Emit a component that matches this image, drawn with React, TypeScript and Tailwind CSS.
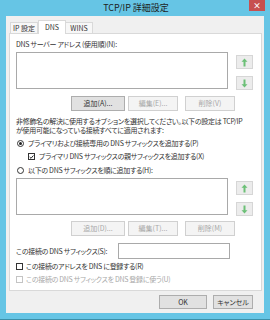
import React from 'react'

function Arrow({ down = false }: { down?: boolean }) {
  return (
    <svg width="7" height="9" viewBox="0 0 7 9" className={down ? 'rotate-180' : ''}>
      <path d="M3.5 0.5 L6.5 3.8 L4.5 3.8 L4.5 8.5 L2.5 8.5 L2.5 3.8 L0.5 3.8 Z" fill="#6cc077" />
    </svg>
  )
}

function ArrowButtons({ top }: { top: string }) {
  return (
    <div className={`flex flex-col gap-[7px] ${top}`}>
      <div className="w-[17px] h-[14px] bg-[#ececec] border border-[#d6d6d6] flex items-center justify-center">
        <Arrow />
      </div>
      <div className="w-[17px] h-[14px] bg-[#ececec] border border-[#d6d6d6] flex items-center justify-center">
        <Arrow down />
      </div>
    </div>
  )
}

function Btn({ label, w, enabled = false }: { label: string; w: string; enabled?: boolean }) {
  return (
    <div
      className={`${w} h-[15px] border flex items-center justify-center text-[7px] ${
        enabled ? 'bg-[#e1e1e1] border-[#adadad] text-[#333]' : 'bg-[#f4f4f4] border-[#d0d0d0] text-[#a8a8a8]'
      }`}
    >
      {label}
    </div>
  )
}

function ListRow({ top }: { top: string }) {
  return (
    <div className="flex">
      <div className="w-[212px] h-[37px] bg-white border border-[#a9a9a9]" />
      <div className="ml-[8px]">
        <ArrowButtons top={top} />
      </div>
    </div>
  )
}

function ButtonRow({ a, b, c }: { a: string; b: string; c: string }) {
  return (
    <div className="flex ml-[55px] gap-[3px] h-[15px]">
      <Btn label={a} w="w-[54px]" enabled={a === '追加(A)...'} />
      <Btn label={b} w="w-[50px]" />
      <div className="w-[1px]" />
      <Btn label={c} w="w-[50px]" />
    </div>
  )
}

export default function App() {
  return (
    <div className="w-[270px] h-[320px] bg-[#66c5e5] flex flex-col font-['Noto_Sans_CJK_JP',sans-serif] [font-feature-settings:'palt'] text-[#333] overflow-hidden">
      <div className="h-[16px] relative flex items-center justify-center">
        <span className="text-[9px] text-[#1e1e1e] pl-[2px]">TCP/IP 詳細設定</span>
        <div className="absolute right-[5px] top-0 w-[16px] h-[11px] bg-[#c75050] flex items-center justify-center text-white text-[8px] font-bold leading-none">
          ×
        </div>
      </div>

      <div className="flex-1 mx-[6px] bg-[#f0f0f0] flex flex-col pl-[3px] pr-[2px] pt-[4px]">
        <div className="flex items-end h-[13px] text-[7px] pl-[1px]">
          <div className="w-[28px] h-[11px] border border-b-0 border-[#d9d9d9] bg-[#f7f7f7] flex items-center justify-center">IP 設定</div>
          <div className="w-[28px] h-[14px] -mb-[1px] border border-b-0 border-[#d9d9d9] bg-white flex items-start pt-[1px] justify-center relative z-10">DNS</div>
          <div className="w-[27px] h-[11px] border border-b-0 border-l-0 border-[#d9d9d9] bg-[#f7f7f7] flex items-center justify-center">WINS</div>
        </div>

        <div className="h-[258px] bg-white border border-[#d9d9d9] flex flex-col pl-[6px] text-[7px] leading-[9px] tracking-[-0.3px]">
          <div className="mt-[6px] h-[10px]">DNS サーバー アドレス (使用順)(N):</div>
          <div className="mt-[2px]">
            <ListRow top="mt-[3px]" />
          </div>
          <div className="mt-[6px] tracking-normal">
            <ButtonRow a="追加(A)..." b="編集(E)..." c="削除(V)" />
          </div>

          <div className="mt-[6px] leading-[9px]">
            <div>非修飾名の解決に使用するオプションを選択してください。以下の設定は TCP/IP</div>
            <div>が使用可能になっている接続すべてに適用されます:</div>
          </div>

          <div className="mt-[3px] h-[11px] flex items-center gap-[4px] pl-[1px]">
            <div className="w-[7px] h-[7px] rounded-full border border-[#333] flex items-center justify-center">
              <div className="w-[3px] h-[3px] rounded-full bg-[#222]" />
            </div>
            <span>プライマリおよび接続専用の DNS サフィックスを追加する(P)</span>
          </div>
          <div className="mt-[2px] h-[11px] flex items-center gap-[4px] pl-[12px]">
            <div className="w-[7px] h-[7px] border border-[#333] flex items-center justify-center">
              <svg width="6" height="6" viewBox="0 0 6 6">
                <path d="M0.8 3 L2.4 4.6 L5.3 1.2" stroke="#222" strokeWidth="1.2" fill="none" />
              </svg>
            </div>
            <span>プライマリ DNS サフィックスの親サフィックスを追加する(X)</span>
          </div>
          <div className="mt-[3px] h-[11px] flex items-center gap-[4px] pl-[1px]">
            <div className="w-[7px] h-[7px] rounded-full border border-[#333]" />
            <span>以下の DNS サフィックスを順に追加する(H):</span>
          </div>

          <div className="mt-[2px]">
            <ListRow top="mt-[3px]" />
          </div>
          <div className="mt-[5px] tracking-normal">
            <ButtonRow a="追加(D)..." b="編集(T)..." c="削除(M)" />
          </div>

          <div className="mt-[7px] flex items-center h-[16px]">
            <span className="w-[102px]">この接続の DNS サフィックス(S):</span>
            <div className="w-[112px] h-[16px] bg-white border border-[#a9a9a9]" />
          </div>

          <div className="mt-[2px] h-[11px] flex items-center gap-[3px]">
            <div className="w-[7px] h-[7px] border border-[#333]" />
            <span>この接続のアドレスを DNS に登録する(R)</span>
          </div>
          <div className="mt-[2px] h-[11px] flex items-center gap-[3px] text-[#a8a8a8]">
            <div className="w-[7px] h-[7px] border border-[#c4c4c4]" />
            <span>この接続の DNS サフィックスを DNS 登録に使う(U)</span>
          </div>
        </div>

        <div className="flex justify-end gap-[6px] mt-[4px] pr-[9px]">
          <div className="w-[48px] h-[14px] bg-[#e1e1e1] border border-[#adadad] flex items-center justify-center text-[7px]">OK</div>
          <div className="w-[40px] h-[14px] bg-[#e1e1e1] border border-[#adadad] flex items-center justify-center text-[7px]">キャンセル</div>
        </div>
      </div>

      <div className="h-[7px] border-b border-[#3c8fa8]" />
    </div>
  )
}
